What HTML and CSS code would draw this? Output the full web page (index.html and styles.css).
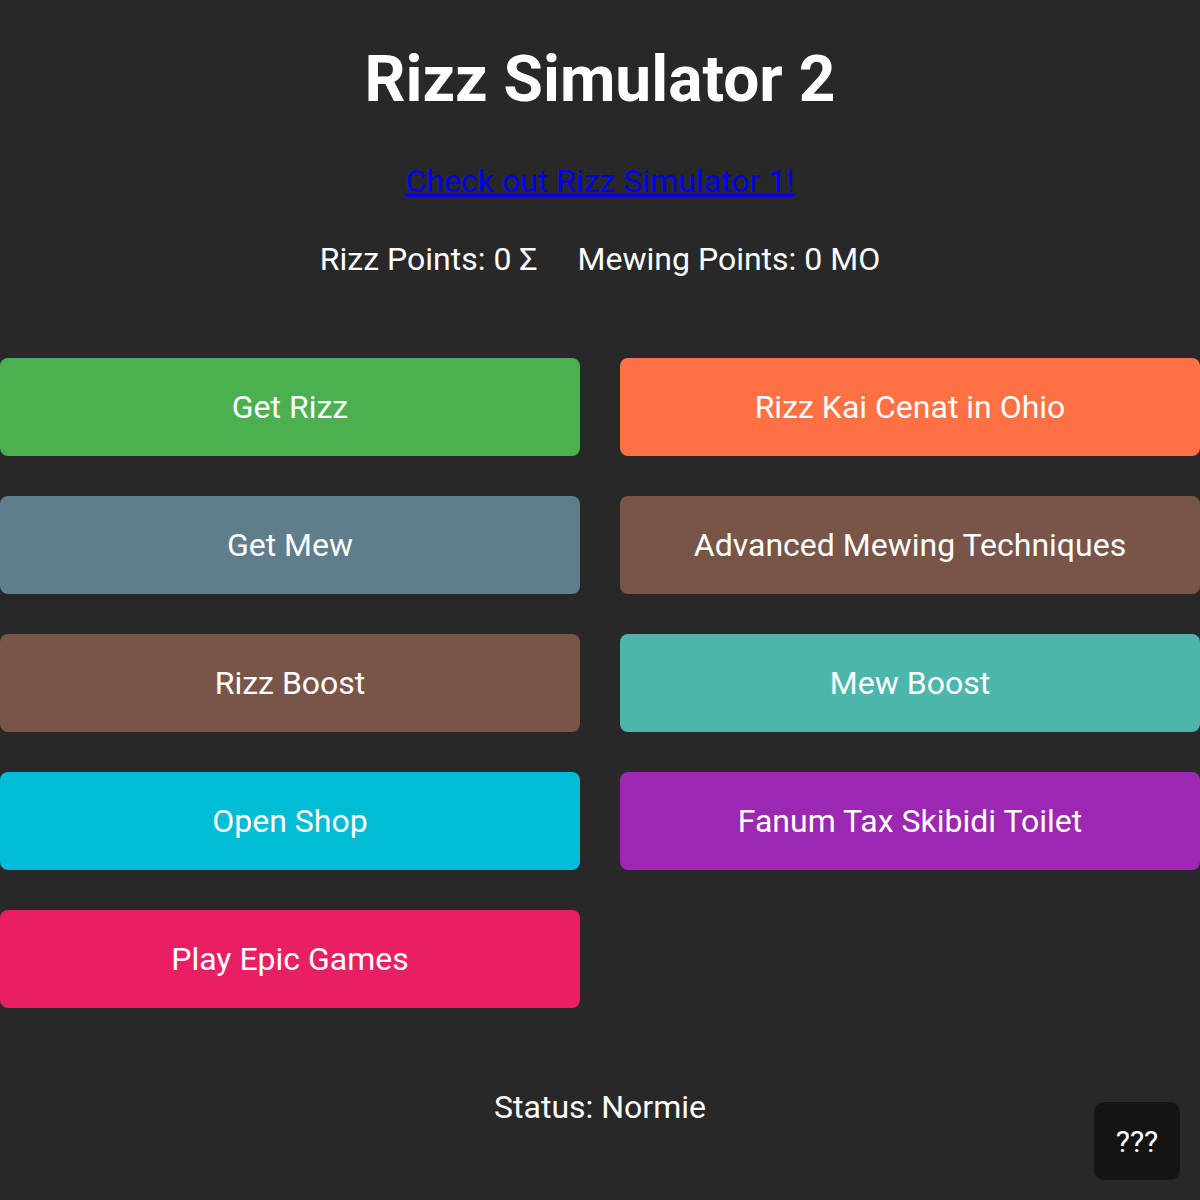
FILE: index.html
```html
<!DOCTYPE html>
<html lang="en">
<head>
<meta charset="utf-8">
<title>Rizz Simulator 2</title>
<link rel="stylesheet" href="styles.css">
</head>
<body>
<main class="page">
  <h1 class="title">Rizz Simulator 2</h1>
  <p class="link-row"><a class="link" href="#">Check out Rizz Simulator 1!</a></p>
  <div class="points">
    <span>Rizz Points: 0 Σ</span>
    <span>Mewing Points: 0 MO</span>
  </div>
  <div class="grid">
    <button class="btn green">Get Rizz</button>
    <button class="btn orange">Rizz Kai Cenat in Ohio</button>
    <button class="btn slate">Get Mew</button>
    <button class="btn brown">Advanced Mewing Techniques</button>
    <button class="btn brown">Rizz Boost</button>
    <button class="btn teal">Mew Boost</button>
    <button class="btn cyan">Open Shop</button>
    <button class="btn purple">Fanum Tax Skibidi Toilet</button>
    <button class="btn pink">Play Epic Games</button>
  </div>
  <p class="status">Status: Normie</p>
</main>
<button class="mystery">???</button>
</body>
</html>
```
FILE: styles.css
```css
html, body {
  margin: 0;
  padding: 0;
  background: #282828;
  color: #ffffff;
  font-family: Roboto, "Liberation Sans", sans-serif;
}
.page {
  display: flex;
  flex-direction: column;
  align-items: stretch;
  text-align: center;
}
.title {
  margin: 42px 0 0;
  font-size: 64px;
  font-weight: 700;
  line-height: 76px;
}
.link-row {
  margin: 44px 0 0;
  font-size: 32px;
  line-height: 38px;
}
.link {
  color: #0000ee;
  text-decoration: underline;
}
.points {
  margin-top: 40px;
  display: flex;
  justify-content: center;
  gap: 40px;
  font-size: 32px;
  line-height: 38px;
  font-weight: 400;
}
.grid {
  margin-top: 80px;
  display: grid;
  grid-template-columns: 1fr 1fr;
  gap: 40px;
}
.btn {
  height: 98px;
  border: none;
  border-radius: 8px;
  color: #ffffff;
  font-family: Roboto, "Liberation Sans", sans-serif;
  font-size: 32px;
  font-weight: 400;
  padding: 0;
}
.green { background: #4caf50; }
.orange { background: #ff7043; }
.slate { background: #607d8b; }
.brown { background: #795548; }
.teal { background: #4db6ac; }
.cyan { background: #00bcd4; }
.purple { background: #9c27b0; }
.pink { background: #e91e63; }
.status {
  margin: 80px 0 0;
  font-size: 32px;
  line-height: 38px;
}
.mystery {
  position: fixed;
  right: 20px;
  bottom: 20px;
  width: 86px;
  height: 78px;
  border: none;
  border-radius: 10px;
  background: #141414;
  color: #ffffff;
  font-family: Roboto, "Liberation Sans", sans-serif;
  font-size: 30px;
}
```
